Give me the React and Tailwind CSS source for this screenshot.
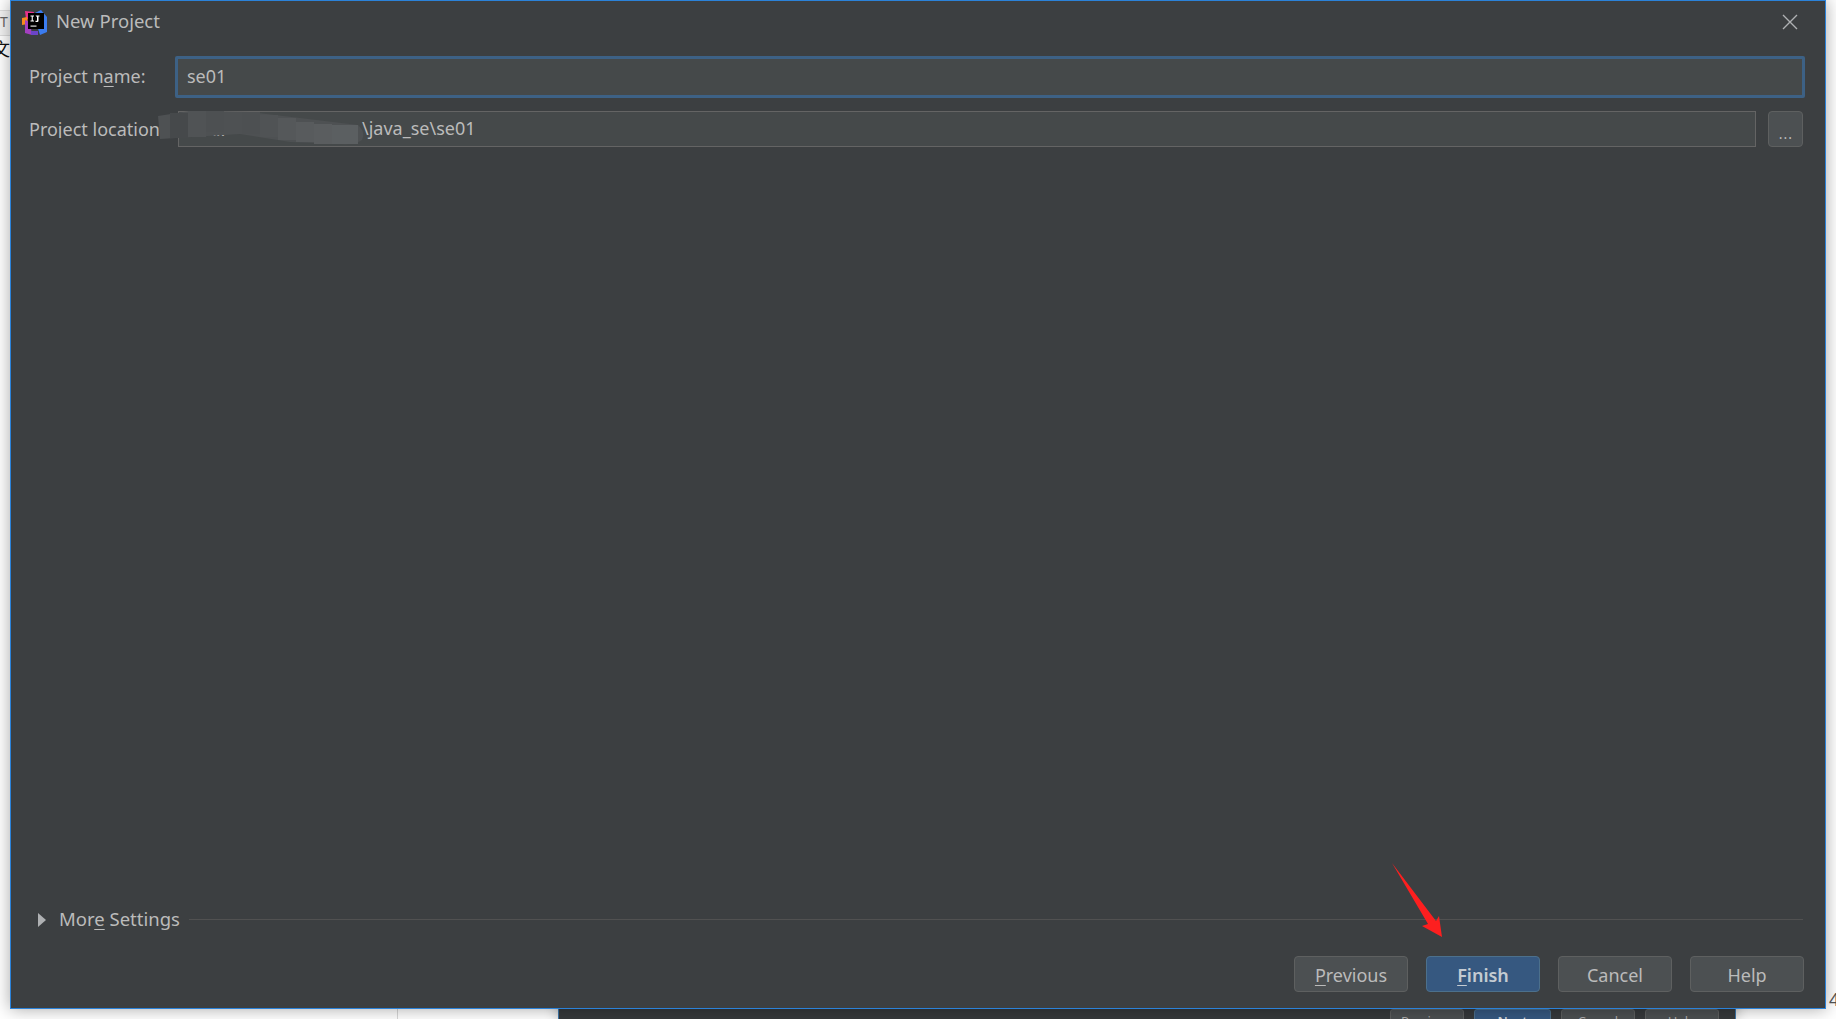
import React from "react";

function U({ children }) {
  return <span className="underline decoration-1 underline-offset-[3px]">{children}</span>;
}

function Btn({ children, primary }) {
  return (
    <button
      className={
        "w-[114px] h-[36px] pt-[1px] rounded-[4px] border text-[18px] leading-none flex items-center justify-center " +
        (primary
          ? "bg-[#365880] border-[#4c708c] text-[#c4cbd2] font-semibold"
          : "bg-[#4c5052] border-[#5e6060] text-[#bbbbbb]")
      }
    >
      {children}
    </button>
  );
}

function Logo() {
  return (
    <svg width="26" height="26" viewBox="0 0 26 26" className="shrink-0">
      <path d="M3 1 L12 2 L10 10 L4 9 Z" fill="#e8308a" />
      <path d="M13 3 L19 0 L25 7 L25 22 L18 25 L14 12 Z" fill="#3b7cf0" />
      <path d="M0 8 L5 7 L6 14 L0 15 Z" fill="#f78a1d" />
      <path d="M3 10 L8 12 L10 25 L3 23 Z" fill="#a33fc0" />
      <path d="M9 21 L16 21 L16 25 L9 25 Z" fill="#6b45c8" />
      <rect x="6" y="3" width="16" height="16" fill="#000000" />
      <path d="M8.5 5.5h3.5v1h-1.2v4h1.2v1h-3.5v-1h1.2v-4h-1.2z M13.5 5.5h4v1h-1v4.2a1.2 1.2 0 0 1-1.2 1.2h-1.8v-1.2h1.5v-4h-.5z" fill="#ffffff" />
      <rect x="8.5" y="15.5" width="6" height="1.2" fill="#e0e0e0" />
    </svg>
  );
}

function Smear() {
  const cells = [
    [170, 113, 18, 25, "#46494b"],
    [188, 111, 18, 26, "#505355"],
    [206, 111, 18, 21, "#4d5052"],
    [224, 112, 18, 20, "#4e5153"],
    [242, 112, 18, 22, "#4d5052"],
    [260, 115, 18, 22, "#505355"],
    [278, 118, 18, 22, "#55585a"],
    [296, 122, 18, 20, "#585b5d"],
    [314, 124, 18, 20, "#5a5d5f"],
    [332, 125, 26, 19, "#5b5f61"],
  ];
  return (
    <svg width="240" height="60" viewBox="150 100 240 60" className="absolute left-[139px] -top-[11px]">
      <path d="M158 116 L190 111 L250 112 L300 118 L358 125 Q366 132 362 140 Q356 145 340 144 L290 142 L240 134 L160 139 Z" fill="#4e5153" />
      {cells.map(([x, y, w, h, c]) => (
        <rect key={x} x={x} y={y} width={w} height={h} fill={c} />
      ))}
    </svg>
  );
}

export default function App() {
  return (
    <div className="relative w-[1836px] h-[1019px] overflow-hidden bg-white font-['Noto_Sans','Open_Sans',sans-serif]">
      {/* Fragments of the document behind */}
      <div className="absolute left-0 top-[10px] w-[10px] h-[26px] bg-[#f3f3f3] border-y border-[#dddddd] text-[14px] leading-[22px] text-[#666666] overflow-hidden">T</div>
      <div className="absolute -left-[8px] top-[36px] text-[18px] leading-[24px] text-[#111111] font-['Noto_Sans_CJK_SC',sans-serif]">文</div>
      <div className="absolute left-[397px] top-[1009px] w-px h-[10px] bg-[#d8d8d8]" />
      <div className="absolute left-[1829px] top-[989px] text-[18px] leading-[20px] text-[#555555]">4</div>

      {/* Window behind the dialog */}
      <div className="absolute left-[558px] top-[990px] w-[1178px] h-[29px] bg-[#36393b] border-l border-r border-[#3d75a8] shadow-[0_0_14px_rgba(0,0,0,0.3)]">
        <div className="absolute left-[831px] top-[19px] flex gap-[10px]">
          {[
            ["Previous", 74, 0],
            ["Next", 77, 1],
            ["Cancel", 74, 0],
            ["Help", 74, 0],
          ].map(([t, w, p]) => (
            <div
              key={t}
              style={{ width: w }}
              className={
                "h-[26px] pt-[3px] text-center text-[13px] leading-[16px] rounded-[3px] border " +
                (p
                  ? "bg-[#365880] border-[#4c708c] text-[#d0d4d8] font-semibold"
                  : "bg-[#4c5052] border-[#5e6060] text-[#aaaaaa]")
              }
            >
              {t}
            </div>
          ))}
        </div>
      </div>

      {/* Dialog */}
      <div className="absolute left-[10px] top-0 w-[1816px] h-[1009px] flex flex-col bg-[#3c3f41] border border-[#2b82d9] shadow-[0_0_16px_rgba(0,0,0,0.35)]">
        <div className="relative h-[43px] shrink-0 flex items-center pl-[11px] gap-[8px] text-[#bbbbbb]">
          <Logo />
          <span className="text-[18.5px] leading-none pb-[2px]">New Project</span>
          <svg width="16" height="16" viewBox="0 0 16 16" className="absolute left-[1771px] top-[13px]">
            <path d="M1 1 L15 15 M15 1 L1 15" stroke="#afb1b3" strokeWidth="1.4" fill="none" />
          </svg>
        </div>

        <div className="flex items-center mt-[12px] pl-[18px] pr-[20px] text-[18px] text-[#bbbbbb]">
          <label className="w-[146px] shrink-0 leading-none pb-[2px]">
            Project n<U>a</U>me:
          </label>
          <div className="flex-1 h-[42px] bg-[#45494a] border-[3px] border-[#3d6185] rounded-[2px] pl-[9px] pb-[2px] flex items-center leading-none">
            se01
          </div>
        </div>

        <div className="relative flex items-center mt-[13px] pl-[18px] pr-[22px] text-[18px] text-[#bbbbbb]">
          <label className="w-[149px] shrink-0 leading-none whitespace-nowrap overflow-hidden">
            Project <U>l</U>ocation:
          </label>
          <div className="flex-1 h-[36px] bg-[#45494a] border border-[#646464] pl-[30px] flex items-center leading-none">
            <span>\..</span>
          </div>
          <div className="ml-[12px] w-[35px] h-[36px] rounded-[4px] bg-[#4c5052] border border-[#5e6060] flex items-end justify-center pb-[5px] pl-[1px] text-[14px] leading-none tracking-[1px]">
            ...
          </div>
          <Smear />
          <span className="absolute left-[351px] top-[8px] leading-none">\java_se\se01</span>
        </div>

        <div className="flex-1" />

        <div className="flex items-center pl-[27px] pr-[22px] text-[18px] text-[#bbbbbb]">
          <svg width="8" height="14" viewBox="0 0 8 14" className="shrink-0">
            <path d="M0 0 L8 7 L0 14 Z" fill="#afb1b3" />
          </svg>
          <span className="ml-[13px] leading-none whitespace-nowrap text-[18.5px] -translate-y-[1px]">
            Mor<U>e</U> Settings
          </span>
          <div className="flex-1 ml-[9px] h-px bg-[#515151]" />
        </div>

        <div className="flex justify-end gap-[18px] mt-[27px] mb-[16px] pr-[21px]">
          <Btn><U>P</U>revious</Btn>
          <Btn primary><U>F</U>inish</Btn>
          <Btn>Cancel</Btn>
          <Btn>Help</Btn>
        </div>
      </div>

      {/* Red annotation arrow */}
      <svg width="60" height="80" viewBox="1390 862 60 80" className="absolute left-[1390px] top-[862px]">
        <path d="M1392 863 L1436 921 L1439 916 L1442 937 L1422 926 L1428 924 Z" fill="#fd1f1f" />
      </svg>
    </div>
  );
}
